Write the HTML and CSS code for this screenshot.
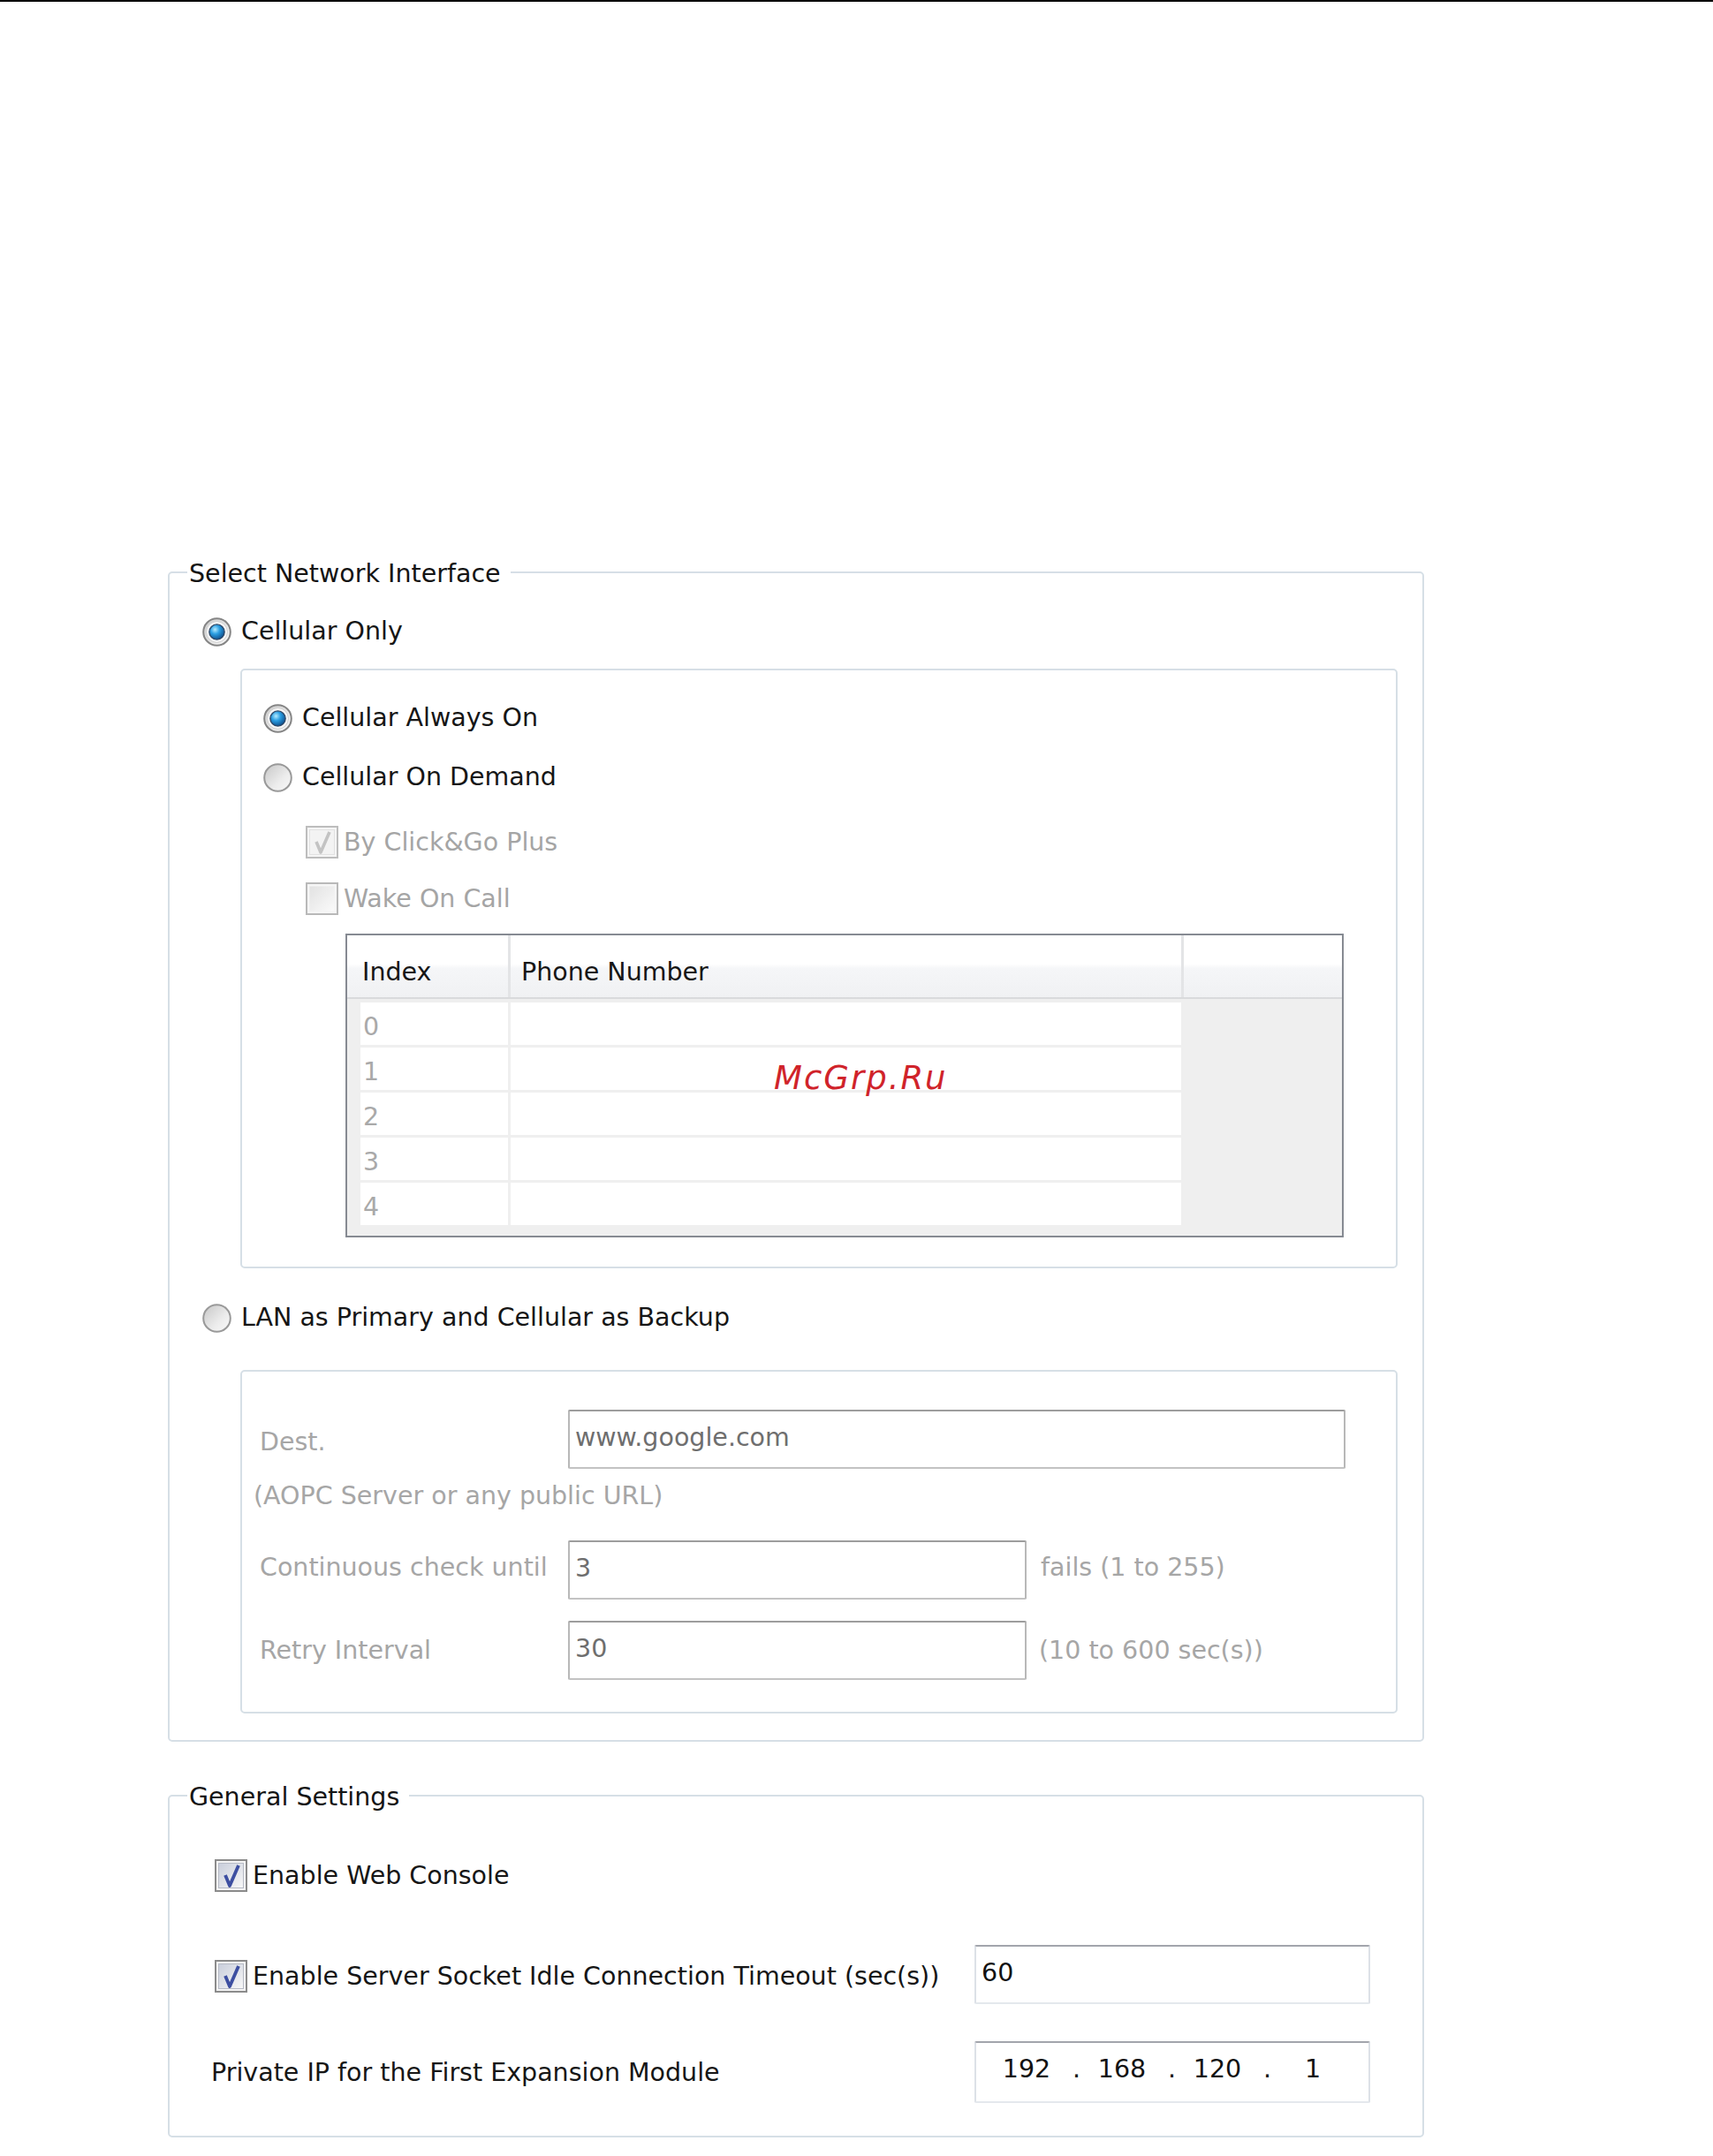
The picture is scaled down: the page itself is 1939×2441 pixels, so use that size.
FILE: index.html
```html
<!DOCTYPE html>
<html lang="en">
<head>
<meta charset="utf-8">
<title>Network Interface Settings</title>
<link rel="stylesheet" href="styles.css">
</head>
<body>
<div class="topline"></div>
<svg class="defs" width="0" height="0" aria-hidden="true">
  <defs>
    <linearGradient id="gRing" x1="0" y1="0" x2="1" y2="1">
      <stop offset="0" stop-color="#c9c9c9"/><stop offset="1" stop-color="#fdfdfd"/>
    </linearGradient>
    <linearGradient id="gRingOff" x1="0" y1="0" x2="1" y2="1">
      <stop offset="0" stop-color="#c6c6c6"/><stop offset="0.6" stop-color="#ececec"/><stop offset="1" stop-color="#fafafa"/>
    </linearGradient>
    <radialGradient id="gDot" cx="0.38" cy="0.34" r="0.72">
      <stop offset="0" stop-color="#b6ecff"/><stop offset="0.42" stop-color="#2b9ee2"/><stop offset="1" stop-color="#0b4683"/>
    </radialGradient>
    <linearGradient id="gBox" x1="0" y1="0" x2="1" y2="1">
      <stop offset="0" stop-color="#c9cedb"/><stop offset="1" stop-color="#f8f8f8"/>
    </linearGradient>
    <linearGradient id="gBoxDis" x1="0" y1="0" x2="1" y2="1">
      <stop offset="0" stop-color="#e2e2e2"/><stop offset="1" stop-color="#fafafa"/>
    </linearGradient>
  </defs>
</svg>

<main class="page">
  <fieldset class="group group-net">
    <legend>Select Network Interface</legend>

    <div class="radio-row r-top">
      <svg class="rb" viewBox="0 0 33 33"><circle cx="16.5" cy="16.5" r="15.3" fill="url(#gRing)" stroke="#858585" stroke-width="2"/><circle cx="16.5" cy="16.5" r="12" fill="#f6f6f6" stroke="#cfcfcf" stroke-width="1"/><circle cx="16.5" cy="16.5" r="8.6" fill="url(#gDot)" stroke="#2c4767" stroke-width="1.4"/></svg>
      <span>Cellular Only</span>
    </div>

    <div class="subbox subbox-cell">
      <div class="radio-row r-always">
        <svg class="rb" viewBox="0 0 33 33"><circle cx="16.5" cy="16.5" r="15.3" fill="url(#gRing)" stroke="#858585" stroke-width="2"/><circle cx="16.5" cy="16.5" r="12" fill="#f6f6f6" stroke="#cfcfcf" stroke-width="1"/><circle cx="16.5" cy="16.5" r="8.6" fill="url(#gDot)" stroke="#2c4767" stroke-width="1.4"/></svg>
        <span>Cellular Always On</span>
      </div>
      <div class="radio-row r-demand">
        <svg class="rb" viewBox="0 0 33 33"><circle cx="16.5" cy="16.5" r="15.3" fill="url(#gRingOff)" stroke="#999999" stroke-width="2"/></svg>
        <span>Cellular On Demand</span>
      </div>
      <div class="chk-row dis c-click">
        <svg class="cb" viewBox="0 0 37 37"><rect x="1" y="1" width="35" height="35" fill="#f5f5f5" stroke="#bdbdbd" stroke-width="2"/><rect x="4.5" y="4.5" width="28" height="28" fill="#f3f3f3" stroke="#e2e2e2" stroke-width="1"/><path d="M12 18 L17 30 L27 7" fill="none" stroke="#c3c3c3" stroke-width="3.6" stroke-linejoin="round"/></svg>
        <span>By Click&amp;Go Plus</span>
      </div>
      <div class="chk-row dis c-wake">
        <svg class="cb" viewBox="0 0 37 37"><rect x="1" y="1" width="35" height="35" fill="#f5f5f5" stroke="#b9b9b9" stroke-width="2"/><rect x="4.5" y="4.5" width="28" height="28" fill="url(#gBoxDis)"/></svg>
        <span>Wake On Call</span>
      </div>

      <div class="phones">
        <div class="ph-head">
          <div class="ph-h ph-idx">Index</div>
          <div class="ph-h ph-num">Phone Number</div>
          <div class="ph-h ph-rest"></div>
        </div>
        <div class="ph-body">
          <div class="ph-c ph-ci">0</div><div class="ph-c"></div>
          <div class="ph-c ph-ci">1</div><div class="ph-c"></div>
          <div class="ph-c ph-ci">2</div><div class="ph-c"></div>
          <div class="ph-c ph-ci">3</div><div class="ph-c"></div>
          <div class="ph-c ph-ci">4</div><div class="ph-c"></div>
        </div>
      </div>
    </div>

    <div class="radio-row r-lan">
      <svg class="rb" viewBox="0 0 33 33"><circle cx="16.5" cy="16.5" r="15.3" fill="url(#gRingOff)" stroke="#999999" stroke-width="2"/></svg>
      <span>LAN as Primary and Cellular as Backup</span>
    </div>

    <div class="subbox subbox-lan">
      <div class="f-row f-dest">
        <div class="f-label">Dest.</div>
        <div class="inp inp-dis inp-dest">www.google.com</div>
      </div>
      <div class="f-hint">(AOPC Server or any public URL)</div>
      <div class="f-row f-cont">
        <div class="f-label">Continuous check until</div>
        <div class="inp inp-dis inp-short">3</div>
        <div class="f-unit">fails (1 to 255)</div>
      </div>
      <div class="f-row f-retry">
        <div class="f-label">Retry Interval</div>
        <div class="inp inp-dis inp-short">30</div>
        <div class="f-unit f-unit-paren">(10 to 600 sec(s))</div>
      </div>
    </div>
  </fieldset>

  <fieldset class="group group-gen">
    <legend>General Settings</legend>

    <div class="chk-row c-web">
      <svg class="cb" viewBox="0 0 37 37"><rect x="1" y="1" width="35" height="35" fill="#f4f4f4" stroke="#8b8b8b" stroke-width="2"/><rect x="4.5" y="4.5" width="28" height="28" fill="url(#gBox)" stroke="#b7bbc6" stroke-width="1"/><path d="M12 18 L17 30 L27 7" fill="none" stroke="#3d4fa1" stroke-width="3.8" stroke-linejoin="round"/></svg>
      <span>Enable Web Console</span>
    </div>

    <div class="g-sock">
      <div class="chk-row g-sock-label">
        <svg class="cb" viewBox="0 0 37 37"><rect x="1" y="1" width="35" height="35" fill="#f4f4f4" stroke="#8b8b8b" stroke-width="2"/><rect x="4.5" y="4.5" width="28" height="28" fill="url(#gBox)" stroke="#b7bbc6" stroke-width="1"/><path d="M12 18 L17 30 L27 7" fill="none" stroke="#3d4fa1" stroke-width="3.8" stroke-linejoin="round"/></svg>
        <span>Enable Server Socket Idle Connection Timeout (sec(s))</span>
      </div>
      <div class="inp inp-en inp-wide">60</div>
    </div>

    <div class="g-ip">
      <div class="g-ip-label">Private IP for the First Expansion Module</div>
      <div class="inp inp-en inp-wide inp-ip">
        <span class="seg">192</span><span class="dot">.</span><span class="seg">168</span><span class="dot">.</span><span class="seg">120</span><span class="dot">.</span><span class="seg">1</span>
      </div>
    </div>
  </fieldset>
</main>

<div class="watermark">McGrp.Ru</div>
</body>
</html>
```

FILE: styles.css
```css
html, body {
  margin: 0;
  padding: 0;
  background: #ffffff;
}

body {
  font-family: "DejaVu Sans", "Noto Sans", sans-serif;
  font-size: 28.5px;
  line-height: 34px;
  color: #161616;
  width: 1939px;
  min-height: 2441px;
}

.topline {
  height: 2px;
  background: #000000;
}

.defs {
  position: absolute;
  width: 0;
  height: 0;
  overflow: hidden;
}

.page {
  padding: 627px 0 0 190px;
}

/* group boxes */
.group {
  box-sizing: border-box;
  width: 1422px;
  min-inline-size: 0;
  margin: 0;
  padding: 0;
  border: 2px solid #d6dfe6;
  border-radius: 5px;
}

.group legend {
  margin-left: 20px;
  padding: 4px 11px 0 2px;
  line-height: 34px;
  color: #141414;
}

.group-net {
  padding-bottom: 30px;
}

.group-gen {
  margin-top: 42px;
  padding-bottom: 37px;
}

.subbox {
  box-sizing: border-box;
  width: 1310px;
  margin-left: 80px;
  border: 2px solid #d6dfe6;
  border-radius: 5px;
}

.subbox-cell {
  margin-top: 25px;
  padding-bottom: 33px;
}

.subbox-lan {
  margin-top: 42px;
  padding-bottom: 36px;
}

/* radios and checkboxes */
.radio-row {
  display: flex;
  align-items: center;
  height: 34px;
}

.rb {
  width: 33px;
  height: 33px;
  flex: none;
  margin-right: 11px;
}

.chk-row {
  display: flex;
  align-items: center;
  height: 37px;
}

.cb {
  width: 37px;
  height: 37px;
  flex: none;
  margin-right: 6px;
}

.dis {
  color: #a5a5a5;
}

.r-top {
  margin: 31px 0 0 37px;
}

.r-lan {
  margin: 39px 0 0 37px;
}

.r-always {
  margin: 37px 0 0 24px;
}

.r-demand {
  margin: 33px 0 0 24px;
}

.c-click {
  margin: 38px 0 0 72px;
}

.c-wake {
  margin: 27px 0 0 72px;
}

/* phone list */
.phones {
  box-sizing: border-box;
  width: 1130px;
  height: 344px;
  margin: 21px 0 0 117px;
  border: 2px solid #868a92;
  display: flex;
  flex-direction: column;
}

.ph-head {
  display: flex;
  flex: none;
  height: 72px;
  box-sizing: border-box;
  border-bottom: 2px solid #d9dadc;
  background: linear-gradient(#ffffff 0%, #ffffff 46%, #f5f6f8 54%, #f0f1f3 100%);
}

.ph-h {
  box-sizing: border-box;
  padding-top: 25px;
  border-right: 3px solid #e3e4e6;
}

.ph-idx {
  width: 185px;
  padding-left: 17px;
}

.ph-num {
  width: 762px;
  padding-left: 12px;
}

.ph-rest {
  flex: 1;
  border-right: none;
}

.ph-body {
  flex: 1;
  background: #efefef;
  padding: 4px 0 0 15px;
  display: grid;
  grid-template-columns: 167px 759px;
  grid-auto-rows: 48px;
  gap: 3px;
  align-content: start;
}

.ph-c {
  background: #ffffff;
}

.ph-ci {
  box-sizing: border-box;
  color: #a9a9a9;
  padding: 5px 0 0 3px;
  line-height: 46px;
}

/* form rows */
.f-row {
  display: flex;
  align-items: flex-start;
}

.f-label {
  width: 349px;
  flex: none;
  color: #a6a6a6;
}

.f-dest {
  margin: 43px 0 0 20px;
}

.f-dest .f-label {
  margin-top: 20px;
}

.f-hint {
  margin: 14px 0 0 13px;
  color: #a6a6a6;
}

.f-cont {
  margin: 33px 0 0 20px;
}

.f-cont .f-label {
  margin-top: 14px;
}

.f-retry {
  margin: 24px 0 0 20px;
}

.f-retry .f-label {
  margin-top: 17px;
}

.f-unit {
  margin: 14px 0 0 16px;
  color: #a6a6a6;
  white-space: nowrap;
}

.f-retry .f-unit {
  margin: 17px 0 0 14px;
}

/* inputs */
.inp {
  box-sizing: border-box;
  height: 67px;
  flex: none;
  border: 2px solid;
  border-radius: 2px;
  padding: 13px 0 0 6px;
  line-height: 34px;
  background: #ffffff;
  white-space: nowrap;
}

.inp-dis {
  border-color: #9d9d9d #b8b8b8 #c3c3c3 #b8b8b8;
  color: #6e6e6e;
}

.inp-en {
  border-color: #a2a5ac #dde1e7 #e4e8ed #dde1e7;
  color: #121212;
}

.inp-dest {
  width: 880px;
}

.inp-short {
  width: 519px;
}

.inp-wide {
  width: 448px;
}

/* general settings */
.c-web {
  margin: 53px 0 0 51px;
}

.g-sock {
  display: flex;
  align-items: flex-start;
  margin: 60px 0 0 51px;
}

.g-sock-label {
  width: 860px;
  flex: none;
  margin-top: 17px;
  white-space: nowrap;
}

.g-ip {
  display: flex;
  align-items: flex-start;
  margin: 42px 0 0 47px;
}

.g-ip-label {
  width: 864px;
  flex: none;
  margin-top: 19px;
}

.inp-ip {
  height: 70px;
  padding-left: 10px;
  display: flex;
}

.seg {
  width: 94px;
  text-align: center;
}

.dot {
  width: 14px;
  text-align: right;
}

/* watermark overlay */
.watermark {
  position: absolute;
  left: 876px;
  top: 1202px;
  font-family: "DejaVu Sans", "Liberation Sans", sans-serif;
  font-style: italic;
  font-size: 37px;
  line-height: 37px;
  letter-spacing: 2px;
  color: #d0232a;
}
```
